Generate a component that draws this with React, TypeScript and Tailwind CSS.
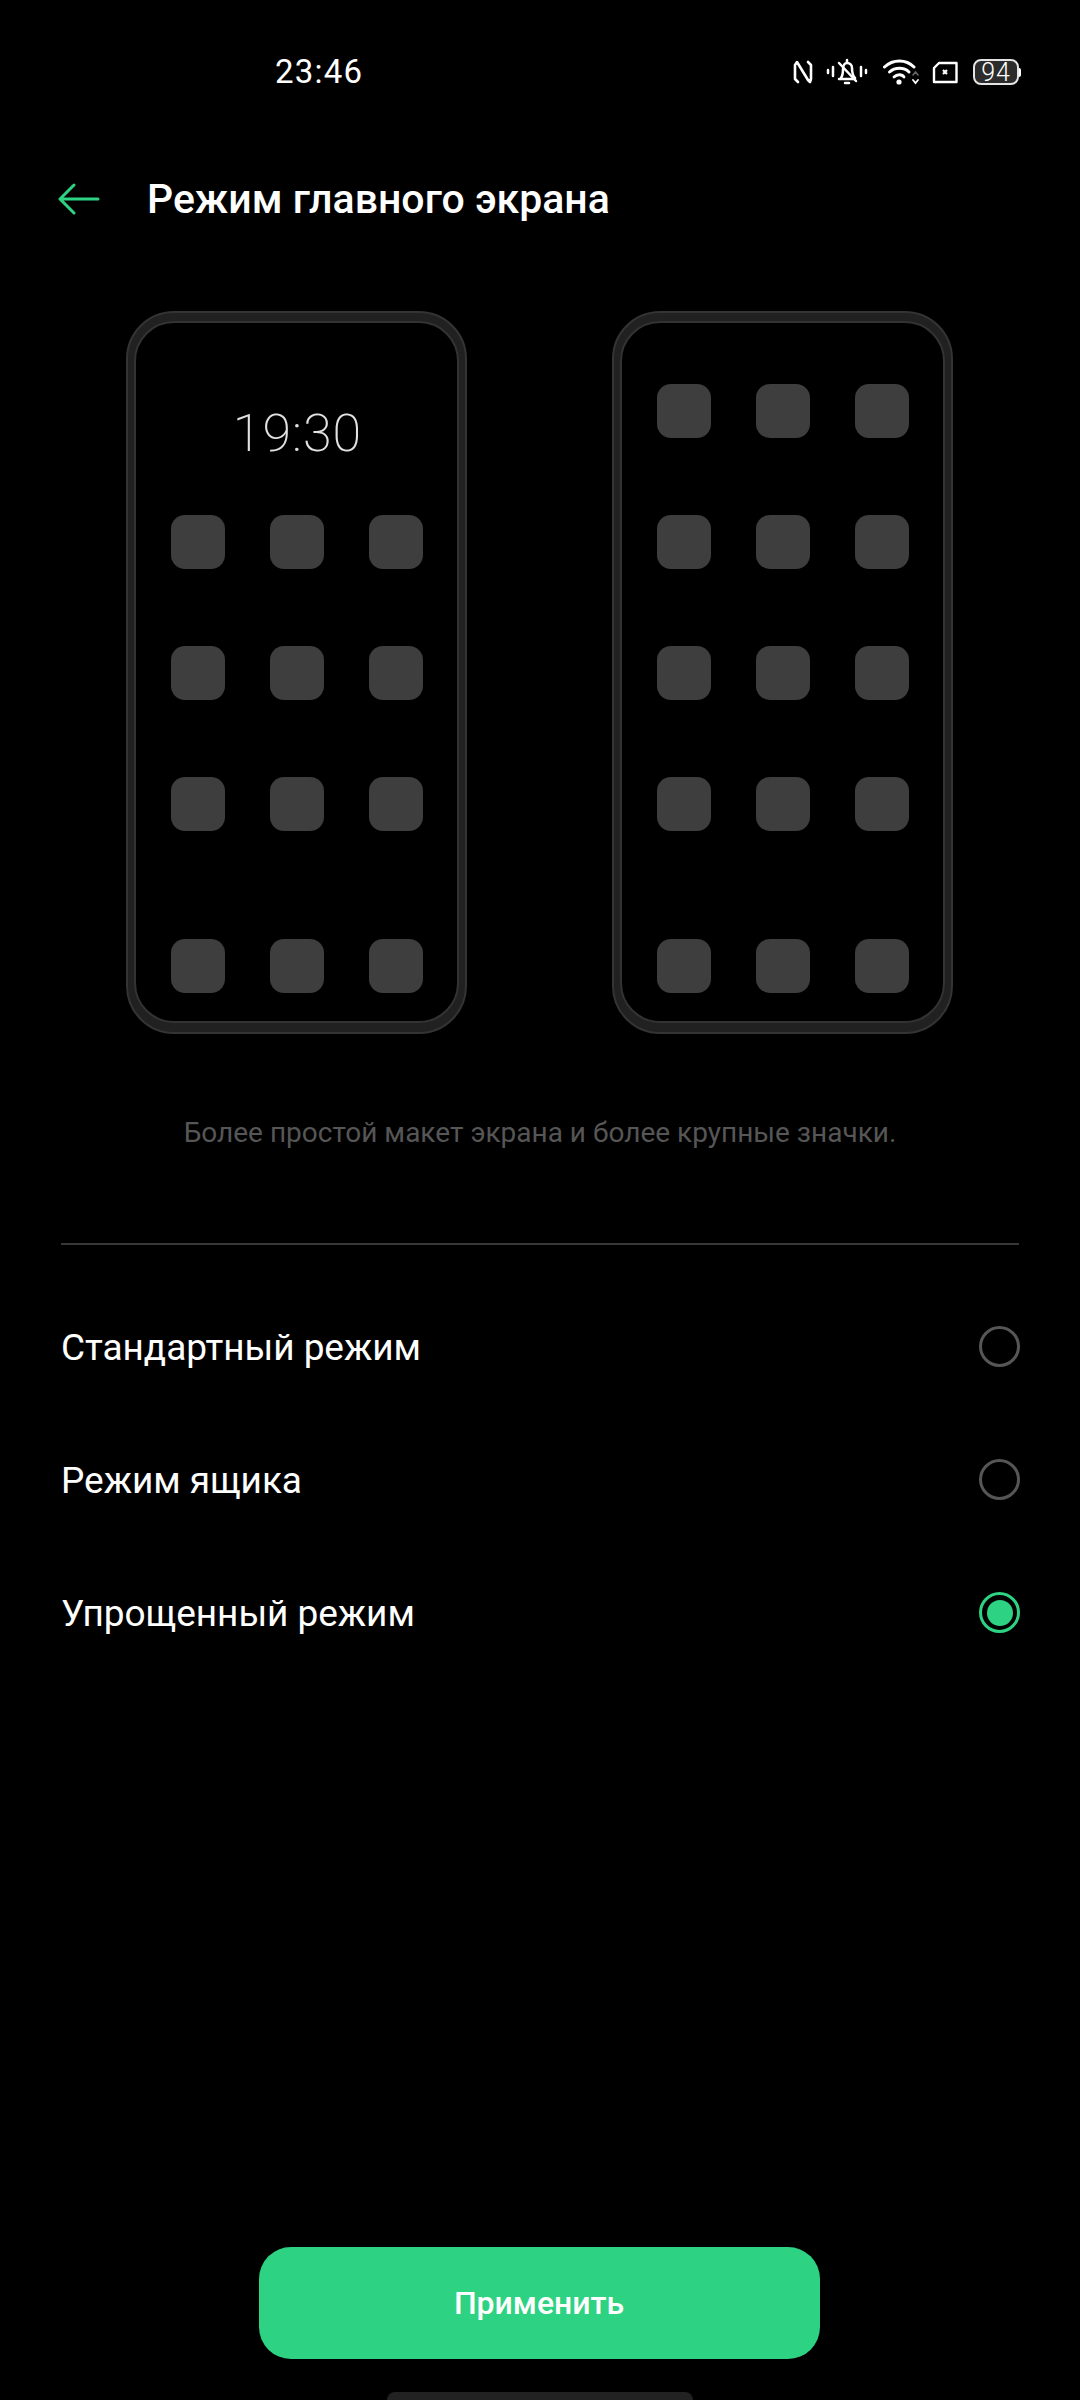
const GREEN = '#2dd282';

const OPTIONS = [
  { label: 'Стандартный режим', selected: false },
  { label: 'Режим ящика', selected: false },
  { label: 'Упрощенный режим', selected: true },
];

function AppIcon() {
  return <div className="h-[54px] w-[54px] rounded-[14px] bg-[#3e3e3e]" />;
}

function IconRows({ rows }: { rows: number }) {
  return (
    <div className="grid grid-cols-[54px_54px_54px] gap-x-[45px] gap-y-[77px]">
      {Array.from({ length: rows * 3 }).map((_, i) => (
        <AppIcon key={i} />
      ))}
    </div>
  );
}

function PhonePreview({ clock, rows }: { clock?: string; rows: number }) {
  return (
    <div className="h-[723px] w-[341px] rounded-[48px] border-2 border-[#343434] bg-[#212121] px-[6px] pb-[9px] pt-[8px]">
      <div className="flex h-full flex-col rounded-[40px] border-2 border-[#333333] bg-black pb-[28px] pl-[35px] pr-[33px] pt-[61px]">
        {clock && (
          <div className="flex h-[131px] justify-center pt-[23px] text-[52px] font-extralight leading-[54px] tracking-[1px] text-[#e2e2e2]">
            {clock}
          </div>
        )}
        <IconRows rows={rows} />
        <div className="mt-auto">
          <IconRows rows={1} />
        </div>
      </div>
    </div>
  );
}

function Radio({ selected }: { selected: boolean }) {
  if (selected) {
    return (
      <div className="flex h-[41px] w-[41px] items-center justify-center rounded-full border-[3px] border-[#2dd282]">
        <div className="h-[26px] w-[26px] rounded-full bg-[#2dd282]" />
      </div>
    );
  }
  return <div className="h-[41px] w-[41px] rounded-full border-[3px] border-[#565656]" />;
}

function StatusIcons() {
  return (
    <div className="flex items-center text-white">
      {/* nfc */}
      <svg width="20" height="24" viewBox="0 0 20 24" fill="none" stroke="white" strokeWidth="2.6" strokeLinejoin="round" strokeLinecap="round">
        <path d="M5 22 L2 19 V5 L4 2 L15 20 L17 22 L18 19 V5 L15 2" />
      </svg>
      {/* muted bell */}
      <svg className="ml-[13px]" width="42" height="28" viewBox="0 0 42 28" fill="none" stroke="white" strokeWidth="2.5" strokeLinecap="round" strokeLinejoin="round">
        <path d="M2 12 v3 M7 9 v9 M35 9 v9 M40 12 v3" />
        <path d="M13 21 h16 M15 20 c2-3 2-5 2-9 c0-4 2-6 4-6 c3 0 5 2 5 5 c0 5 1 8 3 10" />
        <path d="M21 2 v2 M19 25 h4 M13 5 L30 23" />
      </svg>
      {/* wifi */}
      <svg className="ml-[15px]" width="36" height="26" viewBox="0 0 36 26" fill="none" stroke="white" strokeLinecap="round">
        <path d="M1.5 8 C10 0 23 0 31 8" strokeWidth="3" />
        <path d="M6.5 13 C12 8 21 8 26 13" strokeWidth="3" />
        <path d="M11 18 C14 15 19 15 21 18" strokeWidth="2.8" />
        <circle cx="16" cy="23" r="2.6" fill="white" stroke="none" />
        <path d="M30 16 l2.5-3 l2.5 3" strokeWidth="1.6" stroke="#666" />
        <path d="M30 21 l2.5 3 l2.5-3" strokeWidth="1.8" />
      </svg>
      {/* sim slot */}
      <svg className="ml-[13px]" width="26" height="23" viewBox="0 0 26 23" fill="none" stroke="white" strokeWidth="2.4" strokeLinejoin="round">
        <path d="M7 2 H24.5 V21 H2 V7 Z" />
        <path d="M11 9 l4 4 M15 9 l-4 4" strokeWidth="2.2" />
      </svg>
      {/* battery */}
      <div className="ml-[15px] flex items-center">
        <div className="flex h-[26px] w-[46px] items-center justify-center rounded-[8px] border-2 border-[#e4e4e4] bg-[#2c2c2c] text-[25px] font-light leading-none tracking-[1px] text-white">
          94
        </div>
        <div className="h-[9px] w-[2px] rounded-r-full bg-white" />
      </div>
    </div>
  );
}

export default function App() {
  return (
    <div className="flex h-[2400px] w-[1080px] flex-col overflow-hidden bg-black font-['Roboto',sans-serif] text-white">
      <div className="flex h-[142px] items-start justify-between pl-[275px] pr-[59px] pt-[53px]">
        <span className="text-[33px] leading-[38px] tracking-[1.2px]">23:46</span>
        <div className="pt-[5px]">
          <StatusIcons />
        </div>
      </div>

      <div className="flex h-[114px] items-center pl-[58px]">
        <svg width="42" height="32" viewBox="0 0 42 32" fill="none" stroke={GREEN} strokeWidth="3" strokeLinecap="round" strokeLinejoin="round">
          <path d="M40 16 H2 M16 2 L2 16 L16 30" />
        </svg>
        <h1 className="ml-[47px] text-[41px] font-medium leading-[48px]">Режим главного экрана</h1>
      </div>

      <div className="flex gap-[145px] pl-[126px] pt-[55px]">
        <PhonePreview clock="19:30" rows={3} />
        <PhonePreview rows={4} />
      </div>

      <p className="mt-[79px] text-center text-[28px] leading-[40px] text-[#565656]">
        Более простой макет экрана и более крупные значки.
      </p>

      <div className="mx-[61px] mt-[90px] h-[2px] bg-[#383838]" />

      <div className="mt-[36px] flex flex-col pl-[61px] pr-[60px]">
        {OPTIONS.map((o) => (
          <div key={o.label} className="flex h-[133px] items-center justify-between">
            <span className="text-[37px] leading-[44px] tracking-[-0.05px]">{o.label}</span>
            <div className="-mt-[2px]">
              <Radio selected={o.selected} />
            </div>
          </div>
        ))}
      </div>

      <div className="mt-auto flex flex-col items-center">
        <button className="-ml-[2px] flex h-[112px] w-[561px] items-center justify-center rounded-[32px] bg-[#2dd282] text-[32px] font-medium text-white">
          Применить
        </button>
        <div className="mt-[33px] h-[8px] w-[306px] rounded-t-full bg-[#222222]" />
      </div>
    </div>
  );
}
